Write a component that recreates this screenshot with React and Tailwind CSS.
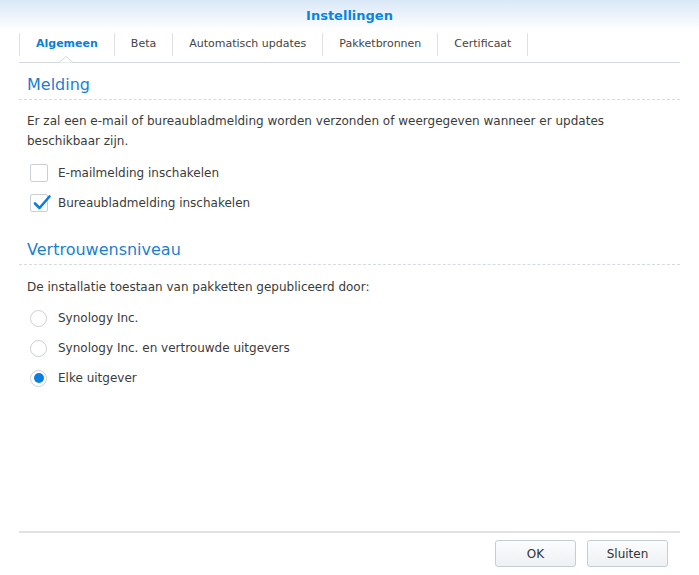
const TABS = ['Algemeen', 'Beta', 'Automatisch updates', 'Pakketbronnen', 'Certificaat']

function Checkbox({ checked, label }) {
  return (
    <div className="flex h-[30px] items-center">
      <div className="relative ml-[3px] h-[18px] w-[18px] rounded-[2px] border border-[#cbd0d5] bg-white">
        {checked && (
          <svg className="absolute left-[1px] top-[-2px]" width="20" height="20" viewBox="0 0 20 20">
            <path d="M3 10.5 L7.5 15 L17.5 3.5" fill="none" stroke="#0b7fd9" strokeWidth="2.6" strokeLinecap="round" strokeLinejoin="round" />
          </svg>
        )}
      </div>
      <span className="ml-[10px]">{label}</span>
    </div>
  )
}

function Radio({ checked, label }) {
  return (
    <div className="flex h-[30px] items-center">
      <div className="ml-[3px] flex h-[17px] w-[17px] items-center justify-center rounded-full border border-[#cbd0d5] bg-white">
        {checked && <div className="h-[10px] w-[10px] rounded-full bg-[#0b7fe0]" />}
      </div>
      <span className="ml-[11px]">{label}</span>
    </div>
  )
}

export default function App() {
  return (
    <div
      className="flex h-[575px] w-[699px] flex-col bg-white text-[12px] text-[#3b3b3b]"
      style={{ fontFamily: '"DejaVu Sans", Verdana, sans-serif' }}
    >
      <div className="h-[31px] bg-gradient-to-b from-[#d9e8f7] to-white text-center text-[13px] font-bold leading-[31px] text-[#0a84e0]">
        Instellingen
      </div>

      <div className="relative mx-[19px] flex h-[32px] border-b border-[#d3d8dd]">
        <div className="mt-[2px] flex h-[23px] border-l border-[#dde1e5] text-[11px]">
          {TABS.map((t, i) => (
            <div
              key={t}
              className={
                'flex items-center border-r border-[#dde1e5] px-4 ' +
                (i === 0 ? 'font-bold text-[#0a7fd8]' : 'text-[#444]')
              }
            >
              {t}
            </div>
          ))}
        </div>
        <svg className="absolute bottom-[-1px] left-[40px]" width="14" height="7" viewBox="0 0 14 7">
          <path d="M0 6.5 L7 0.5 L14 6.5 Z" fill="white" />
          <path d="M0 6.5 L7 0.5 L14 6.5" fill="none" stroke="#d3d8dd" strokeWidth="1" />
        </svg>
      </div>

      <div className="flex-1 px-[19px]">
        <div className="mt-[12px] border-b border-dashed border-[#d6dbe0] pb-[4px] pl-[8px] text-[16px] leading-[20px] text-[#1a7fd3]">
          Melding
        </div>
        <div className="pl-[8px]">
          <p className="mt-[11px] leading-[20px]">
            Er zal een e-mail of bureaubladmelding worden verzonden of weergegeven wanneer er updates beschikbaar zijn.
          </p>
          <div className="mt-[7px]">
            <Checkbox label="E-mailmelding inschakelen" />
            <Checkbox checked label="Bureaubladmelding inschakelen" />
          </div>
        </div>

        <div className="mt-[22px] border-b border-dashed border-[#d6dbe0] pb-[4px] pl-[8px] text-[16px] leading-[20px] text-[#1a7fd3]">
          Vertrouwensniveau
        </div>
        <div className="pl-[8px]">
          <p className="mt-[12px] leading-[20px]">De installatie toestaan van pakketten gepubliceerd door:</p>
          <div className="mt-[6px]">
            <Radio label="Synology Inc." />
            <Radio label="Synology Inc. en vertrouwde uitgevers" />
            <Radio checked label="Elke uitgever" />
          </div>
        </div>
      </div>

      <div className="mx-[19px] flex justify-end gap-[11px] border-t-2 border-[#e2e2e2] pb-[8px] pr-[12px] pt-[7px]">
        <button className="h-[27px] w-[81px] rounded-[3px] border border-[#c6cdd4] bg-gradient-to-b from-[#fbfcfd] to-[#eef1f4] text-[12px] text-[#333]">
          OK
        </button>
        <button className="h-[27px] w-[81px] rounded-[3px] border border-[#c6cdd4] bg-gradient-to-b from-[#fbfcfd] to-[#eef1f4] text-[12px] text-[#333]">
          Sluiten
        </button>
      </div>
    </div>
  )
}
